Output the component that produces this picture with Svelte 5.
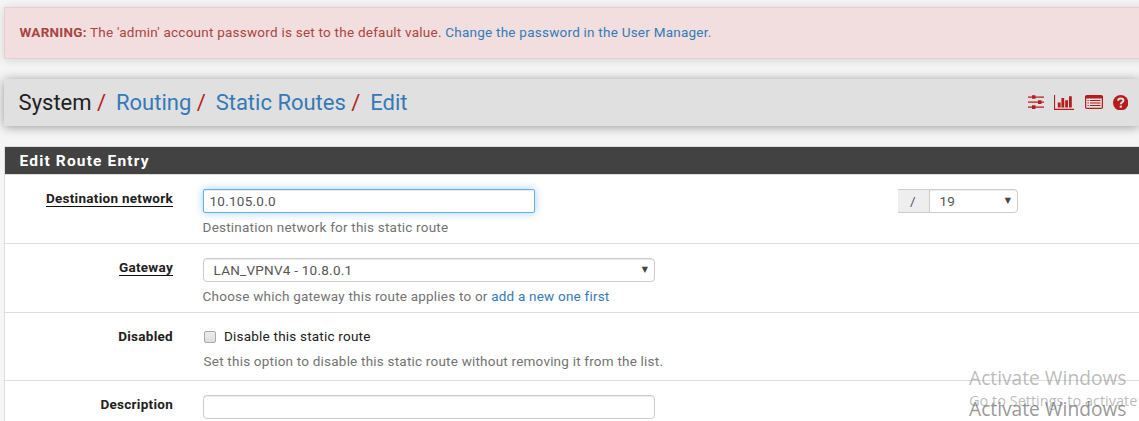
<script>
  let destination = $state('10.105.0.0');
  let description = $state('');
  let disabled = $state(false);
  const crumbs = ['Routing', 'Static Routes', 'Edit'];
</script>

<div class="page">
  <div class="alert">
    <strong>WARNING:</strong> <span class="msg">The 'admin' account password is set to the default value.</span>
    <a href="#users">Change the password in the User Manager.</a>
  </div>

  <header>
    <nav>
      <span class="current">System</span>
      {#each crumbs as crumb}
        <i>/</i><a href="#crumb">{crumb}</a>
      {/each}
    </nav>
    <div class="icons">
      <svg class="sliders" width="16" height="14" viewBox="0 0 16 14" fill="#b71c1c">
        <path d="M0 1.500h16v1.200H0zM0 6.500h16v1.200H0zM0 11.500h16v1.200H0z" />
        <path d="M4 0.200h3.500v3.600H4zM10 5.200h3.500v3.800H10zM4 10.200h3.500v3.800H4z" />
      </svg>
      <svg class="chart" width="20" height="15" viewBox="0 0 20 15" fill="#b71c1c">
        <path d="M0 0h1.100v13.800H20V15H0zM3.800 7.500h2.800v5H3.800zM7.400 3h2.800v9.500H7.400zM11.200 5.200h2.800v7.300h-2.800zM15 1.200h2.800v11.300H15z" />
      </svg>
      <svg class="list" width="18" height="14" viewBox="0 0 18 14">
        <rect x=".6" y=".6" width="16.800" height="12.800" rx="1.200" fill="none" stroke="#b71c1c" stroke-width="1.200" />
        <path d="M.5 1h17v2.500H.5zM2.500 5h1.300v1.100H2.500zM2.500 7.500h1.300v1.100H2.500zM2.500 10h1.300v1.100H2.500zM5 5h10.500v1.100H5zM5 7.500h10.500v1.100H5zM5 10h10.500v1.100H5z" fill="#b71c1c" />
      </svg>
      <svg class="help" width="15.400" height="15.400" viewBox="0 0 16 16">
        <circle cx="8" cy="8" r="8" fill="#b71c1c" />
        <path d="M5.300 6C5.400 2.700 10.800 2.800 10.800 5.700C10.800 7.500 8.100 7.500 8.100 9.600" fill="none" stroke="#e0e0e0" stroke-width="2.100" />
        <path d="M7 11h2.200v2.200H7z" fill="#e0e0e0" />
      </svg>
    </div>
  </header>

  <section class="panel">
    <h2>Edit Route Entry</h2>
    <div class="row">
      <div class="label"><span class="required">Destination network</span></div>
      <div class="field">
        <div class="line">
          <input class="control focused" type="text" bind:value={destination} />
          <div class="group">
            <span class="addon">/</span>
            <div class="control select mask"><span>19</span><b>▼</b></div>
          </div>
        </div>
        <p class="help-text">Destination network for this static route</p>
      </div>
    </div>
    <div class="row">
      <div class="label"><span class="required">Gateway</span></div>
      <div class="field">
        <div class="control select wide"><span>LAN_VPNV4 - 10.8.0.1</span><b>▼</b></div>
        <p class="help-text gate">Choose which gateway this route applies to or <a href="#add">add a new one first</a></p>
      </div>
    </div>
    <div class="row short">
      <div class="label"><span>Disabled</span></div>
      <div class="field">
        <label class="check"><input type="checkbox" bind:checked={disabled} /><span>Disable this static route</span></label>
        <p class="help-text option">Set this option to disable this static route without removing it from the list.</p>
      </div>
    </div>
    <div class="row">
      <div class="label"><span>Description</span></div>
      <div class="field">
        <input class="control wide" type="text" bind:value={description} aria-label="Description" />
      </div>
    </div>
  </section>

  <div class="watermark first">
    <div class="title">Activate Windows</div>
    <div class="sub">Go to Settings to activate</div>
  </div>
  <div class="watermark second"><div class="title">Activate Windows</div></div>
</div>

<style>
  :global(body) { background: #f5f5f5; overflow: hidden; }
  * { box-sizing: border-box; }
  .page {
    position: relative;
    width: 1139px;
    height: 421px;
    padding: 7px 0 0 4px;
    overflow: hidden;
    background: #f5f5f5;
    color: #212121;
    font: 13.5px/18px Roboto, sans-serif;
    letter-spacing: 0.21px;
  }
  a { color: #337ab7; text-decoration: none; }
  .alert {
    width: 1150px;
    height: 52px;
    padding: 15px 14.6px;
    border: 1px solid #ebccd1;
    background: #f2dede;
    color: #a94442;
    letter-spacing: 0.235px;
    box-shadow: 0 1px 10px rgba(0, 0, 0, 0.14);
  }
  header {
    display: flex;
    justify-content: space-between;
    align-items: center;
    height: 47px;
    margin-top: 20px;
    padding: 0 11px 0 14.6px;
    background: #e0e0e0;
    box-shadow: 0 1px 10px rgba(0, 0, 0, 0.38);
  }
  nav { display: flex; font-size: 22px; line-height: 28px; letter-spacing: 0; }
  nav i { width: 19px; margin-left: 5.4px; color: #b71c1c; font-style: normal; }
  .icons { display: flex; align-items: center; }
  .chart { margin-left: 9.6px; }
  .list { margin-left: 10.6px; }
  .help { margin-left: 10px; }
  .panel { width: 1150px; height: 290px; margin-top: 20px; border: 1px solid #ddd; background: #fff; }
  h2 {
    height: 27px;
    margin: 0;
    padding-left: 14.6px;
    background: #424242;
    color: #fff;
    font-size: 15.5px;
    line-height: 28px;
    font-weight: 700;
    letter-spacing: 1.15px;
  }
  .row {
    display: grid;
    grid-template-columns: 168px 1fr;
    column-gap: 30px;
    height: 69px;
    padding-top: 14px;
    border-top: 1px solid #ddd;
  }
  .row.short { height: 68px; }
  .label { padding-top: 1px; text-align: right; font-weight: 700; line-height: 17px; letter-spacing: 0.28px; }
  .label span { display: inline-block; height: 17px; }
  .label .required { border-bottom: 1px solid #111; }
  .line { display: flex; justify-content: space-between; width: 815px; }
  .control {
    display: block;
    width: 332px;
    height: 24px;
    border: 1px solid #ccc;
    border-radius: 4px;
    background: #fff;
    color: #555;
    font: 13.5px/22px Roboto, sans-serif;
    letter-spacing: 0.25px;
    padding: 0 5.5px;
    box-shadow: inset 0 1px 1px rgba(0, 0, 0, 0.075);
    outline: none;
  }
  .focused { border-color: #66afe9; border-radius: 2px; box-shadow: inset 0 1px 1px rgba(0, 0, 0, 0.075), 0 0 8px rgba(102, 175, 233, 0.6); }
  .wide { width: 452px; }
  .select { display: flex; justify-content: space-between; padding: 0 6px 0 9.5px; }
  .select b { color: #444; font: 8px/21px "DejaVu Sans", sans-serif; letter-spacing: 0; }
  .group { display: flex; }
  .addon { width: 31px; height: 24px; border: 1px solid #ccc; border-width: 1px 0; background: #eee; color: #555; line-height: 22px; text-align: center; padding-right: 1px; }
  .mask { width: 89px; border-radius: 0 4px 4px 0; }
  .help-text { margin: 5px 0 0 -0.4px; color: #737373; line-height: 19px; }
  .check { display: flex; align-items: center; height: 18px; }
  .check input { appearance: none; width: 12px; height: 12px; margin: 2px 8px 0 1px; border: 1px solid #aaa; border-radius: 2px; background: linear-gradient(#eee, #ddd); }
  .help-text.option { margin: 7px 0 0 0.6px; }
  .watermark { position: absolute; left: 969px; font-family: "Open Sans", sans-serif; white-space: nowrap; color: rgba(130, 130, 130, 0.55); letter-spacing: 0; }
  .first { top: 366px; }
  .second { top: 397px; color: rgba(100, 100, 100, 0.68); }
  .title { font-size: 19.2px; line-height: 24px; }
  .sub { font-size: 14.5px; line-height: 21px; }
</style>
